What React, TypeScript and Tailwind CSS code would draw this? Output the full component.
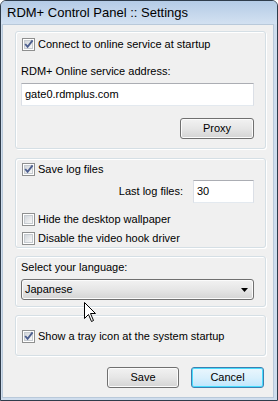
import React from "react";

function CheckBox({ checked, label }: { checked?: boolean; label: string }) {
  return (
    <div className="flex h-[13px] items-center gap-[3px]">
      <div className="h-[13px] w-[13px] shrink-0 border border-[#8e8f8f] bg-white p-[1px]">
        <div className="relative h-full w-full border border-[#c6cbd0] bg-gradient-to-br from-[#d2d6db] to-[#f8f8f8]">
          {checked && (
            <svg className="absolute -left-[1px] -top-[2px]" width="10" height="10" viewBox="0 0 10 10">
              <path d="M1.2 5 L3.6 7.8 L8.6 1.4" fill="none" stroke="#4d5f8f" strokeWidth="1.9" />
            </svg>
          )}
        </div>
      </div>
      <span className="leading-[13px]">{label}</span>
    </div>
  );
}

function TextBox({ value, className }: { value: string; className: string }) {
  return (
    <div
      className={`flex items-center border border-[#dbdfe6] border-t-[#abadb3] border-b-[#e3e9ef] bg-white px-[3px] ${className}`}
    >
      {value}
    </div>
  );
}

function Button({ label, className, isDefault }: { label: string; className: string; isDefault?: boolean }) {
  return (
    <div
      className={`flex items-center justify-center rounded-[3px] border ${
        isDefault
          ? "border-[#3c7fb1] shadow-[inset_0_0_0_1px_#48dcfd] bg-gradient-to-b from-[#eaf6fd] via-[#d9f0fc] to-[#bee6fd]"
          : "border-[#707070] shadow-[inset_0_0_0_1px_#fbfbfb] bg-gradient-to-b from-[#f2f2f2] via-[#e6e6e6] to-[#d4d4d4]"
      } ${className}`}
    >
      {label}
    </div>
  );
}

function Group({ className, children }: { className: string; children: React.ReactNode }) {
  return (
    <div
      className={`ml-[12px] w-[251px] rounded-[3px] border border-[#d5dfe5] shadow-[inset_1px_1px_0_#fff,1px_1px_0_#fff] ${className}`}
    >
      {children}
    </div>
  );
}

export default function App() {
  return (
    <div className="relative flex h-[401px] w-[278px] flex-col rounded-t-[6px] border border-[#2f3c4b] bg-[#cfdded] font-['Liberation_Sans',Arial,sans-serif] text-[11px] text-black">
      {/* title bar */}
      <div className="flex h-[23px] shrink-0 items-center rounded-t-[5px] bg-gradient-to-b from-[#b4cbe6] to-[#d3e1f1] pl-[6px] text-[13px]">
        RDM+ Control Panel :: Settings
      </div>

      <div className="mb-[2px] ml-[1px] mr-[3px] flex flex-1 flex-col border border-[#b9c9da] bg-[#f0f0f0] pt-[6px]">
        <Group className="h-[118px] pl-[5px] pr-[11px] pt-[6px]">
          <div className="ml-[1px]">
            <CheckBox checked label="Connect to online service at startup" />
          </div>
          <div className="mt-[14px] leading-[13px]">RDM+ Online service address:</div>
          <TextBox value="gate0.rdmplus.com" className="mt-[5px] h-[23px] w-full" />
          <div className="mt-[12px] flex justify-end">
            <Button label="Proxy" className="h-[21px] w-[74px]" />
          </div>
        </Group>

        <Group className="mt-[9px] h-[90px] pl-[5px] pr-[11px] pt-[4px]">
          <div className="ml-[1px]">
            <CheckBox checked label="Save log files" />
          </div>
          <div className="mt-[4px] flex items-center justify-end gap-[10px]">
            <span>Last log files:</span>
            <TextBox value="30" className="h-[23px] w-[61px]" />
          </div>
          <div className="ml-[1px] mt-[10px] flex flex-col gap-[6px]">
            <CheckBox label="Hide the desktop wallpaper" />
            <CheckBox label="Disable the video hook driver" />
          </div>
        </Group>

        <Group className="mt-[8px] h-[51px] pl-[5px] pr-[11px] pt-[4px]">
          <div className="leading-[13px]">Select your language:</div>
          <div className="mt-[5px] flex h-[21px] w-full items-center justify-between rounded-[3px] border border-[#707070] bg-gradient-to-b from-[#f2f2f2] via-[#e6e6e6] to-[#d4d4d4] pl-[3px] pr-[5px] shadow-[inset_0_0_0_1px_#fbfbfb]">
            <span>Japanese</span>
            <svg width="7" height="4" viewBox="0 0 7 4">
              <path d="M0 0 H7 L3.5 4 Z" fill="#000" />
            </svg>
          </div>
        </Group>

        <Group className="mt-[8px] h-[41px] pl-[6px] pt-[14px]">
          <CheckBox checked label="Show a tray icon at the system startup" />
        </Group>

        <div className="ml-[104px] mt-[11px] flex gap-[12px]">
          <Button label="Save" className="h-[21px] w-[72px]" />
          <Button label="Cancel" className="h-[21px] w-[73px]" isDefault />
        </div>
      </div>

      {/* mouse pointer */}
      <svg className="absolute left-[83px] top-[301px]" width="13" height="21" viewBox="0 0 13 21">
        <path d="M0.5 0.5 L0.5 16.5 L4.5 12.5 L7.5 19.5 L9.5 18.5 L6.5 11.5 L11.5 11.5 Z" fill="#fff" stroke="#000" strokeWidth="1" strokeLinejoin="miter" />
      </svg>
    </div>
  );
}
